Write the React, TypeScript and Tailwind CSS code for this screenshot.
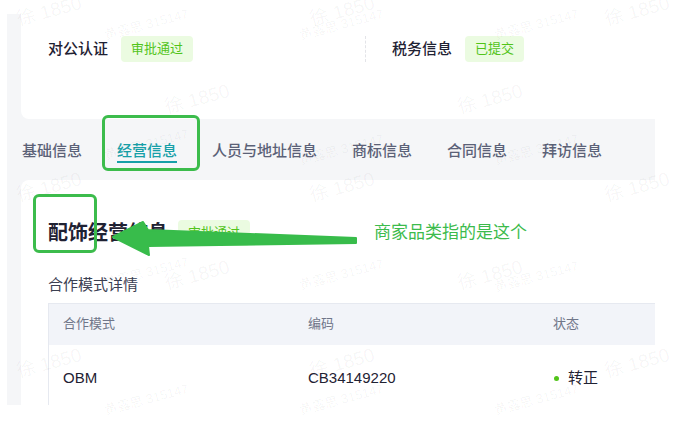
import React from "react";

const font = { fontFamily: '"Liberation Sans", "Noto Sans CJK SC", sans-serif' };

const tabs = ["基础信息", "经营信息", "人员与地址信息", "商标信息", "合同信息", "拜访信息"];

// watermark grid
const nameMarks: [number, number][] = [
  [17, -2], [310, -2], [605, -2],
  [165, 86], [458, 86],
  [17, 174], [310, 174], [605, 174],
  [165, 262], [458, 262],
  [17, 350], [310, 350], [605, 350],
];
const idMarks: [number, number][] = [
  [105, 20], [300, 20], [495, 20],
  [105, 140], [300, 145], [495, 145],
  [105, 268], [300, 270], [495, 272],
  [105, 395], [300, 395], [495, 395],
];

function Badge({ children }: { children: React.ReactNode }) {
  return (
    <span className="inline-flex h-[26px] items-center rounded-[4px] bg-[#ebfbe1] px-[10px] text-[13px] text-[#52c41a]">
      {children}
    </span>
  );
}

export default function App() {
  return (
    <div className="relative h-[423px] w-[679px] overflow-hidden bg-white" style={font}>
      <div className="ml-[7px] mt-[14px] h-[391px] w-[648px] overflow-hidden bg-[#f5f6f8]">
        {/* top summary card */}
        <div className="ml-[14px] flex h-[105px] w-[660px] rounded-b-lg bg-white pt-[22px]">
          <div className="flex h-[26px] w-[344px] items-center gap-[13px] pl-[27px]">
            <span className="text-[15px] font-medium text-[#1f2233]">对公认证</span>
            <Badge>审批通过</Badge>
          </div>
          <div className="h-[26px] border-l border-dashed border-[#e3e4e8]" />
          <div className="flex h-[26px] items-center gap-[13px] pl-[26px]">
            <span className="text-[15px] font-medium text-[#1f2233]">税务信息</span>
            <Badge>已提交</Badge>
          </div>
        </div>

        {/* tabs */}
        <div className="flex h-[61px] items-start gap-[35px] pl-[15px] pt-[22px]">
          {tabs.map((t, i) => (
            <div key={t} className="flex flex-col">
              <span
                className={
                  i === 1
                    ? "text-[15px] font-medium leading-[20px] text-[#17a0a8]"
                    : "text-[15px] font-medium leading-[20px] text-[#5b6177]"
                }
              >
                {t}
              </span>
              {i === 1 && <div className="h-[2px] bg-[#17a0a8]" />}
            </div>
          ))}
        </div>

        {/* business card */}
        <div className="ml-[14px] h-[300px] w-[660px] rounded-t-lg bg-white pl-[27px] pt-[38px]">
          <div className="flex items-center gap-[10px]">
            <h2 className="text-[20px] font-bold text-[#1f2233]">配饰经营信息</h2>
            <Badge>审批通过</Badge>
          </div>
          <div className="mt-[26px] text-[15px] text-[#3b4052]">合作模式详情</div>
          <div className="mt-[6px] border-t border-l border-[#e6e9f0]">
            <div className="flex h-[41px] items-center bg-[#f2f4f9] text-[13px] text-[#707689]">
              <div className="w-[245px] pl-[14px]">合作模式</div>
              <div className="w-[245px] pl-[14px]">编码</div>
              <div className="pl-[14px]">状态</div>
            </div>
            <div className="flex h-[68px] items-center text-[15px] text-[#1f2233]">
              <div className="w-[245px] pl-[14px]">OBM</div>
              <div className="w-[245px] pl-[14px]">CB34149220</div>
              <div className="flex items-center gap-[9px] pl-[15px]">
                <span className="h-[5px] w-[5px] rounded-full bg-[#52c41a]" />
                转正
              </div>
            </div>
          </div>
        </div>
      </div>

      {/* watermarks */}
      {nameMarks.map(([x, y], i) => (
        <span
          key={"n" + i}
          className="pointer-events-none absolute origin-left -rotate-[15deg] whitespace-nowrap text-[19px] text-black/[0.045]"
          style={{ left: x, top: y + 8 }}
        >
          徐 1850
        </span>
      ))}
      {idMarks.map(([x, y], i) => (
        <span
          key={"d" + i}
          className="pointer-events-none absolute origin-left -rotate-[15deg] whitespace-nowrap text-[13px] text-black/[0.045]"
          style={{ left: x, top: y + 6 }}
        >
          黄露思 315147
        </span>
      ))}

      {/* annotations */}
      <div className="pointer-events-none absolute left-[102px] top-[115px] h-[56px] w-[98px] rounded-[6px] border-[3px] border-[#3cbc4c]" />
      <div className="pointer-events-none absolute left-[33px] top-[194px] h-[59px] w-[64px] rounded-[6px] border-[3px] border-[#3cbc4c]" />
      <svg className="pointer-events-none absolute left-0 top-0" width="679" height="423">
        <polygon
          points="113,237 143,222 148,230 356,238 356,243 148,246 149,255"
          fill="#38bc4b"
          stroke="#38bc4b"
          strokeWidth="2"
          strokeLinejoin="round"
        />
      </svg>
      <span className="absolute left-[374px] top-[222px] text-[17px] leading-[22px] text-[#3cbb4c]">
        商家品类指的是这个
      </span>
    </div>
  );
}
